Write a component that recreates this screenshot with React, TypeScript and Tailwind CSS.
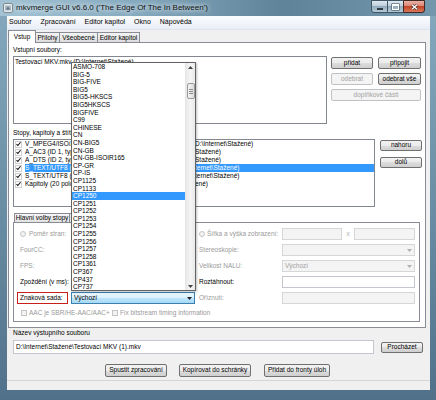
import React from 'react';

const FONT = "font-['Liberation_Sans',Arial,sans-serif]";

const charsets = [
  'ASMO-708', 'BIG-5', 'BIG-FIVE', 'BIG5', 'BIG5-HKSCS', 'BIG5HKSCS', 'BIGFIVE', 'C99', 'CHINESE', 'CN',
  'CN-BIG5', 'CN-GB', 'CN-GB-ISOIR165', 'CP-GR', 'CP-IS', 'CP1125', 'CP1133', 'CP1250', 'CP1251', 'CP1252',
  'CP1253', 'CP1254', 'CP1255', 'CP1256', 'CP1257', 'CP1258', 'CP1361', 'CP367', 'CP437', 'CP737',
];

const tracks = [
  { head: 'V_MPEG4/ISO/AVC (ID 0, typ: video) z Testovací MKV.mkv (', tail: 'D:\\Internet\\Stažené)' },
  { head: 'A_AC3 (ID 1, typ: audio) z Testovací MKV.mkv (D:\\Internet\\', tail: 'Stažené)' },
  { head: 'A_DTS (ID 2, typ: audio) z Testovací MKV.mkv (D:\\Internet\\', tail: 'Stažené)' },
  { head: 'S_TEXT/UTF8 (ID 3, typ: titulky) z Testovací MKV.mkv (D:\\In', tail: 'ternet\\Stažené)', selected: true },
  { head: 'S_TEXT/UTF8 (ID 4, typ: titulky) z Testovací MKV.mkv (D:\\In', tail: 'ternet\\Stažené)' },
  { head: 'Kapitoly (20 položek) z Testovací MKV.mkv (D:\\Internet\\Staž', tail: 'ené)' },
];

type BtnProps = { label: string; className: string; disabled?: boolean };

const Button: React.FC<BtnProps> = ({ label, className, disabled }) => (
  <div
    className={`${className} flex shrink-0 items-center justify-center whitespace-nowrap rounded-[2px] border leading-none ${
      disabled
        ? 'border-[#bfc2c5] bg-[#f4f4f4] text-[#a3a3a3]'
        : 'border-[#707070] bg-[linear-gradient(#f2f2f2_0%,#ebebeb_50%,#dddddd_50%,#cfcfcf_100%)] text-black'
    }`}
  >
    {label}
  </div>
);

const Arrow = ({ color = '#555' }: { color?: string }) => (
  <svg width="5" height="3" viewBox="0 0 5 3" className="shrink-0">
    <path d="M0 0h5L2.5 3z" fill={color} />
  </svg>
);

type FieldProps = { className: string; disabled?: boolean; combo?: boolean; children?: React.ReactNode };

const Field: React.FC<FieldProps> = ({ className, disabled, combo, children }) => (
  <div
    className={`${className} flex h-[12px] shrink-0 items-center border px-[2px] leading-none ${
      disabled ? 'border-[#d4d6d8] bg-[#f4f4f4] text-[#a0a0a0]' : 'border-[#c3c6cc] bg-white text-black'
    }`}
  >
    <span className="flex-1 whitespace-nowrap">{children}</span>
    {combo && <Arrow color={disabled ? '#b0b0b0' : '#444'} />}
  </div>
);

const Radio = () => <span className="h-[6px] w-[6px] shrink-0 rounded-full border border-[#c4c4c4] bg-[#f3f3f3]" />;

const Box = () => <span className="h-[6px] w-[6px] shrink-0 border border-[#c4c4c4] bg-[#f3f3f3]" />;

const Checked = () => (
  <span className="flex h-[7px] w-[7px] shrink-0 items-center justify-center border border-[#d0d0d0] bg-white">
    <svg width="6" height="6" viewBox="0 0 6 6">
      <path d="M0.6 3.2 2.2 4.8 5.4 0.9" stroke="#111" strokeWidth="1.3" fill="none" />
    </svg>
  </span>
);

const Label = ({ text, dim, className = '' }: { text: string; dim?: boolean; className?: string }) => (
  <span className={`${className} flex shrink-0 items-center whitespace-nowrap ${dim ? 'text-[#9a9a9a]' : 'text-black'}`}>{text}</span>
);

export default function App() {
  return (
    <div
      className={`relative h-[400px] w-[436px] overflow-hidden ${FONT} text-[6.5px] text-black bg-[linear-gradient(180deg,#86a9be_0%,#6d92a8_45%,#51718a_100%)]`}
    >
      {/* title bar */}
      <div className="flex h-[16px] items-start bg-[linear-gradient(90deg,#a3c3d4_0%,#86aabf_30%,#5f8399_65%,#7398ad_100%)]">
        <svg width="10" height="10" viewBox="0 0 10 10" className="ml-[3px] mt-[3px] shrink-0">
          <rect x="0.5" y="0.5" width="9" height="9" rx="1.5" fill="#e9edf0" stroke="#7d8a93" />
          <rect x="2" y="2.5" width="6" height="5" fill="#a9b6bf" />
          <path d="M3 6.5 5 3.5 7 6.5z" fill="#5d7385" />
        </svg>
        <span className="ml-[3px] mt-[2px] whitespace-nowrap text-[8px] leading-[11px] text-[#111] [text-shadow:0_0_4px_#e8f2f7,0_0_6px_#e8f2f7]">
          mkvmerge GUI v6.6.0 ('The Edge Of The In Between')
        </span>
        <div className="ml-auto mr-[11px] flex h-[13px]">
          <div className="flex w-[17px] items-center justify-center rounded-bl-[3px] border border-[#3f5564] bg-[linear-gradient(#dfe9f0_0%,#b9cbd8_50%,#93abbd_50%,#b5cad8_100%)]">
            <span className="mt-[4px] h-[2px] w-[6px] border border-[#2f3b44] bg-white" />
          </div>
          <div className="flex w-[15px] items-center justify-center border-y border-[#3f5564] bg-[linear-gradient(#dfe9f0_0%,#b9cbd8_50%,#93abbd_50%,#b5cad8_100%)]">
            <span className="h-[6px] w-[7px] border-[1.5px] border-t-[2px] border-white shadow-[0_0_0_0.5px_#2f3b44]" />
          </div>
          <div className="flex w-[22px] items-center justify-center rounded-br-[3px] border border-[#3f2a25] bg-[linear-gradient(#eab1a5_0%,#d9806d_50%,#c24527_50%,#d9785a_100%)]">
            <svg width="7" height="6" viewBox="0 0 7 6">
              <path d="M1 0.8 6 5.2M6 0.8 1 5.2" stroke="#3b2722" strokeWidth="2.4" />
              <path d="M1 0.8 6 5.2M6 0.8 1 5.2" stroke="#fff" strokeWidth="1.4" />
            </svg>
          </div>
        </div>
      </div>

      {/* client area */}
      <div className="ml-[7px] flex h-[374px] w-[423px] flex-col bg-[#f0f0f0]">
        {/* menu */}
        <div className="flex h-[14px] shrink-0 items-center gap-[9px] border-b border-[#dfe5ee] bg-[linear-gradient(#fbfcfe,#e9eef6)] pl-[2px] text-[7px]">
          <span>Soubor</span>
          <span>Zpracování</span>
          <span>Editor kapitol</span>
          <span>Okno</span>
          <span>Nápověda</span>
        </div>

        {/* main tabs */}
        <div className="flex h-[12px] shrink-0 items-end pl-[1px]">
          <div className="relative z-10 mb-[-1px] flex h-[13px] w-[28px] items-center justify-center border border-b-0 border-[#898c95] bg-white">Vstup</div>
          <div className="flex h-[10px] w-[24px] items-center justify-center border border-b-0 border-l-0 border-[#898c95] bg-[linear-gradient(#f4f4f4,#dcdcdc)]">Přílohy</div>
          <div className="flex h-[10px] w-[38px] items-center justify-center border border-b-0 border-l-0 border-[#898c95] bg-[linear-gradient(#f4f4f4,#dcdcdc)]">Všeobecné</div>
          <div className="flex h-[10px] w-[42px] items-center justify-center border border-b-0 border-l-0 border-[#898c95] bg-[linear-gradient(#f4f4f4,#dcdcdc)]">Editor kapitol</div>
        </div>

        {/* outer panel */}
        <div className="ml-[1px] flex h-[286px] w-[418px] shrink-0 flex-col border border-[#898c95] bg-white pl-[4px] pt-[2px]">
          <div className="h-[10px] leading-[10px]">Vstupní soubory:</div>
          <div className="mt-[1px] flex h-[68px] items-start">
            <div className="h-[68px] w-[314px] border border-[#828790] bg-white px-[1px] pt-[1px] leading-[7px]">
              Testovací MKV.mkv (D:\Internet\Stažené)
            </div>
            <div className="ml-[4px] mt-[1px] flex w-[90px] flex-col gap-[4px]">
              <div className="flex gap-[5px]">
                <Button label="přidat" className="h-[12px] w-[42px]" />
                <Button label="připojit" className="h-[12px] w-[43px]" />
              </div>
              <div className="flex gap-[5px]">
                <Button label="odebrat" className="h-[12px] w-[42px]" disabled />
                <Button label="odebrat vše" className="h-[12px] w-[43px]" />
              </div>
              <Button label="doplňkové části" className="h-[12px] w-[90px]" disabled />
            </div>
          </div>

          <div className="mt-[4px] h-[10px] leading-[10px]">Stopy, kapitoly a štítky:</div>
          <div className="mt-[1px] flex h-[68px] items-start">
            <div className="flex h-[68px] w-[362px] flex-col overflow-hidden border border-[#828790] bg-white pl-[1px]">
              {tracks.map((t, i) => (
                <div key={i} className="flex h-[8px] shrink-0 items-center">
                  <Checked />
                  <div
                    className={`ml-[3px] flex h-[8px] flex-1 items-center whitespace-nowrap ${
                      t.selected ? 'bg-[#3399ff] text-white' : ''
                    }`}
                  >
                    <span className="w-[170px] shrink-0 overflow-hidden">{t.head}</span>
                    <span>{t.tail}</span>
                  </div>
                </div>
              ))}
            </div>
            <div className="ml-[5px] mt-[1px] flex flex-col gap-[6px]">
              <Button label="nahoru" className="h-[11px] w-[42px]" />
              <Button label="dolů" className="h-[11px] w-[42px]" />
            </div>
          </div>

          {/* inner tabs */}
          <div className="mt-[6px] flex h-[9px] items-end pl-[1px]">
            <div className="flex h-[9px] w-[56px] items-center justify-center border border-b-0 border-[#898c95] bg-[linear-gradient(#f6f6f6,#e2e2e2)]">Hlavní volby stopy</div>
            <div className="flex h-[9px] w-[62px] items-center justify-center border border-b-0 border-l-0 border-[#898c95] bg-[linear-gradient(#f6f6f6,#e2e2e2)]">Další volby</div>
            <div className="flex h-[9px] w-[64px] items-center justify-center border border-b-0 border-l-0 border-[#898c95] bg-[linear-gradient(#f6f6f6,#e2e2e2)]">Formát</div>
          </div>
          <div className="flex h-[100px] w-[407px] flex-col gap-[4px] border border-[#898c95] bg-white pl-[6px] pt-[5px]">
            <div className="flex h-[12px]">
              <span className="flex w-[51px] shrink-0 items-center gap-[3px]">
                <Radio />
                <Label text="Poměr stran:" dim />
              </span>
              <Field className="w-[124px]" disabled combo />
              <span className="ml-[4px] flex w-[83px] shrink-0 items-center gap-[2px]">
                <Radio />
                <Label text="Šířka a výška zobrazení:" dim />
              </span>
              <Field className="w-[60px]" disabled />
              <span className="flex w-[12px] items-center justify-center text-[#b0b0b0]">x</span>
              <Field className="w-[61px]" disabled />
            </div>
            <div className="flex h-[12px]">
              <Label text="FourCC:" dim className="w-[51px]" />
              <Field className="w-[124px]" disabled />
              <Label text="Stereoskopie:" dim className="ml-[4px] w-[83px]" />
              <Field className="w-[133px]" disabled combo />
            </div>
            <div className="flex h-[12px]">
              <Label text="FPS:" dim className="w-[51px]" />
              <Field className="w-[124px]" disabled combo />
              <Label text="Velikost NALU:" dim className="ml-[4px] w-[83px]" />
              <Field className="w-[133px]" disabled combo>Výchozí</Field>
            </div>
            <div className="flex h-[12px]">
              <Label text="Zpoždění (v ms):" className="w-[51px]" />
              <Field className="w-[124px]" />
              <Label text="Roztáhnout:" className="ml-[4px] w-[83px]" />
              <Field className="w-[133px]" />
            </div>
            <div className="flex h-[12px]">
              <Label text="Znaková sada:" className="ml-[-3px] mr-[3px] w-[51px] border border-[#c81e1e] pl-[2px]" />
              <div className="flex h-[12px] w-[124px] shrink-0 items-center border border-[#3c7fb1] bg-[linear-gradient(#eaf6fd_0%,#d9f0fc_50%,#bee6fd_50%,#a7d9f5_100%)] px-[2px]">
                <span className="flex-1">Výchozí</span>
                <Arrow color="#222" />
              </div>
              <Label text="Oříznutí:" dim className="ml-[4px] w-[83px]" />
              <Field className="w-[133px]" disabled />
            </div>
            <div className="flex h-[9px] items-center">
              <span className="ml-[1px] flex w-[91px] items-center gap-[2px]">
                <Box />
                <Label text="AAC je SBR/HE-AAC/AAC+" dim />
              </span>
              <span className="flex items-center gap-[2px]">
                <Box />
                <Label text="Fix bitstream timing information" dim />
              </span>
            </div>
          </div>
        </div>

        {/* output */}
        <div className="ml-[6px] h-[9px] shrink-0 leading-[9px]">Název výstupního souboru</div>
        <div className="ml-[6px] mt-[3px] flex h-[14px] shrink-0 items-center">
          <div className="flex h-[14px] w-[361px] items-center border border-[#c3c6cc] bg-white px-[2px]">
            D:\Internet\Stažené\Testovací MKV (1).mkv
          </div>
          <Button label="Procházet" className="ml-[7px] h-[11px] w-[42px]" />
        </div>
        <div className="mt-[10px] flex h-[13px] shrink-0 pl-[98px]">
          <Button label="Spustit zpracování" className="h-[13px] w-[62px]" />
          <Button label="Kopírovat do schránky" className="ml-[12px] h-[13px] w-[72px]" />
          <Button label="Přidat do fronty úloh" className="ml-[13px] h-[13px] w-[66px]" />
        </div>
        <div className="mt-[3px] h-[10px] shrink-0 border-t border-[#d5d5d5] bg-[#f0f0f0]" />
      </div>

      {/* open charset drop-down list */}
      <div className="absolute left-[71px] top-[62px] flex h-[229px] w-[125px] border border-[#646464] bg-white shadow-[1px_1px_2px_rgba(0,0,0,0.25)]">
        <div className="flex flex-1 flex-col overflow-hidden">
          {charsets.map((c) => (
            <div
              key={c}
              className={`h-[7.6px] shrink-0 whitespace-nowrap pl-[1px] leading-[7.6px] ${
                c === 'CP1250' ? 'bg-[#3399ff] text-white' : ''
              }`}
            >
              {c}
            </div>
          ))}
        </div>
        <div className="flex w-[10px] flex-col items-center border-l border-[#e6e6e6] bg-[linear-gradient(90deg,#e9e9e9,#f5f5f5_50%,#e9e9e9)]">
          <div className="flex h-[8px] w-full items-center justify-center">
            <svg width="5" height="3" viewBox="0 0 5 3">
              <path d="M0 3h5L2.5 0z" fill="#444" />
            </svg>
          </div>
          <div className="mt-[12px] flex h-[16px] w-[8px] flex-col items-center justify-center gap-[1px] rounded-[2px] border border-[#9a9a9a] bg-[linear-gradient(90deg,#f4f4f4,#dcdcdc)]">
            <span className="h-px w-[4px] bg-[#8c8c8c]" />
            <span className="h-px w-[4px] bg-[#8c8c8c]" />
            <span className="h-px w-[4px] bg-[#8c8c8c]" />
          </div>
          <div className="mt-auto flex h-[8px] w-full items-center justify-center">
            <svg width="5" height="3" viewBox="0 0 5 3">
              <path d="M0 0h5L2.5 3z" fill="#444" />
            </svg>
          </div>
        </div>
      </div>
    </div>
  );
}
